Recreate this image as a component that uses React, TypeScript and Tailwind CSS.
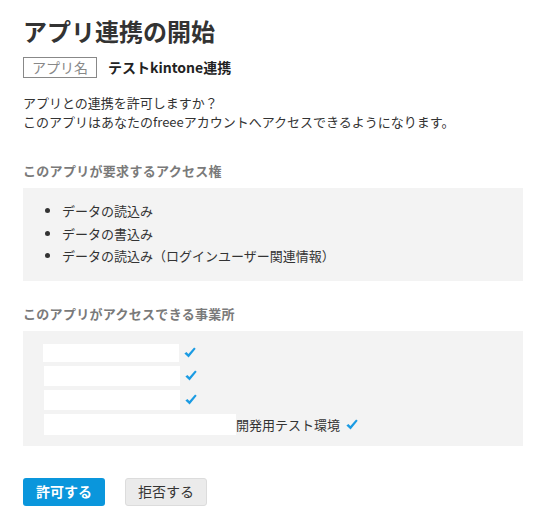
const font = { fontFamily: '"Noto Sans CJK JP", "Noto Sans", sans-serif' };

const Check = () => (
  <svg width="12" height="11" viewBox="0 0 12 11" className="shrink-0">
    <path d="M0.4 6.4 L2.4 4.9 L4.4 7.1 L10.1 0.4 L11.7 1.7 L4.6 10.6 Z" fill="#1a9be3" />
  </svg>
);

const offices = [
  { w: "w-[136px]", h: "h-[18px]", ml: "ml-0", label: "" },
  { w: "w-[136px]", h: "h-[20px]", ml: "ml-[1px]", label: "" },
  { w: "w-[136px]", h: "h-[20px]", ml: "ml-[1px]", label: "" },
  { w: "w-[192px]", h: "h-[21px]", ml: "ml-[1px]", label: "開発用テスト環境" },
];

const App = () => {
  return (
    <div className="min-h-screen bg-white text-[#333]" style={font}>
      <main className="w-[500px] ml-[23px] pt-[15px]">
        <h1 className="text-[24px] leading-[32px] font-bold text-[#333]">アプリ連携の開始</h1>

        <div className="flex items-center mt-[10px]">
          <span className="h-[21px] w-[74px] border border-[#888] flex items-center justify-center text-[14px] text-[#888]">
            アプリ名
          </span>
          <span className="ml-[11px] text-[14px] font-bold text-[#222]">テストkintone連携</span>
        </div>

        <p className="mt-[15px] text-[13px] leading-[19px]">
          アプリとの連携を許可しますか？
          <br />
          このアプリはあなたのfreeeアカウントへアクセスできるようになります。
        </p>

        <h2 className="mt-[31px] text-[13px] leading-[18px] tracking-[0.3px] font-bold text-[#7a7a7a]">
          このアプリが要求するアクセス権
        </h2>
        <div className="mt-[8px] bg-[#f3f3f3] pt-[12px] pb-[13px] pl-[39px]">
          <ul className="list-disc text-[13px] leading-[22.5px]">
            <li>データの読込み</li>
            <li>データの書込み</li>
            <li>データの読込み（ログインユーザー関連情報）</li>
          </ul>
        </div>

        <h2 className="mt-[24px] text-[13px] leading-[18px] tracking-[0.3px] font-bold text-[#7a7a7a]">
          このアプリがアクセスできる事業所
        </h2>
        <div className="mt-[8px] bg-[#f3f3f3] pt-[13px] pb-[11px] pl-[20px] flex flex-col gap-[4px]">
          {offices.map((o, i) => (
            <div key={i} className={`flex items-center ${o.ml}`}>
              <span className={`${o.w} ${o.h} bg-white`} />
              {o.label ? (
                <span className="text-[13px] leading-[21px] mr-[6px]">{o.label}</span>
              ) : (
                <span className="w-[5px]" />
              )}
              <Check />
            </div>
          ))}
        </div>

        <div className="mt-[32px] flex gap-[20px]">
          <button className="w-[82px] h-[28px] rounded-[3px] bg-[#0a96dc] text-white text-[14px] font-bold">
            許可する
          </button>
          <button className="w-[82px] h-[28px] rounded-[3px] bg-[#ebebeb] border border-[#dcdcdc] text-[#333] text-[14px]">
            拒否する
          </button>
        </div>
      </main>
    </div>
  );
};

export default App;
